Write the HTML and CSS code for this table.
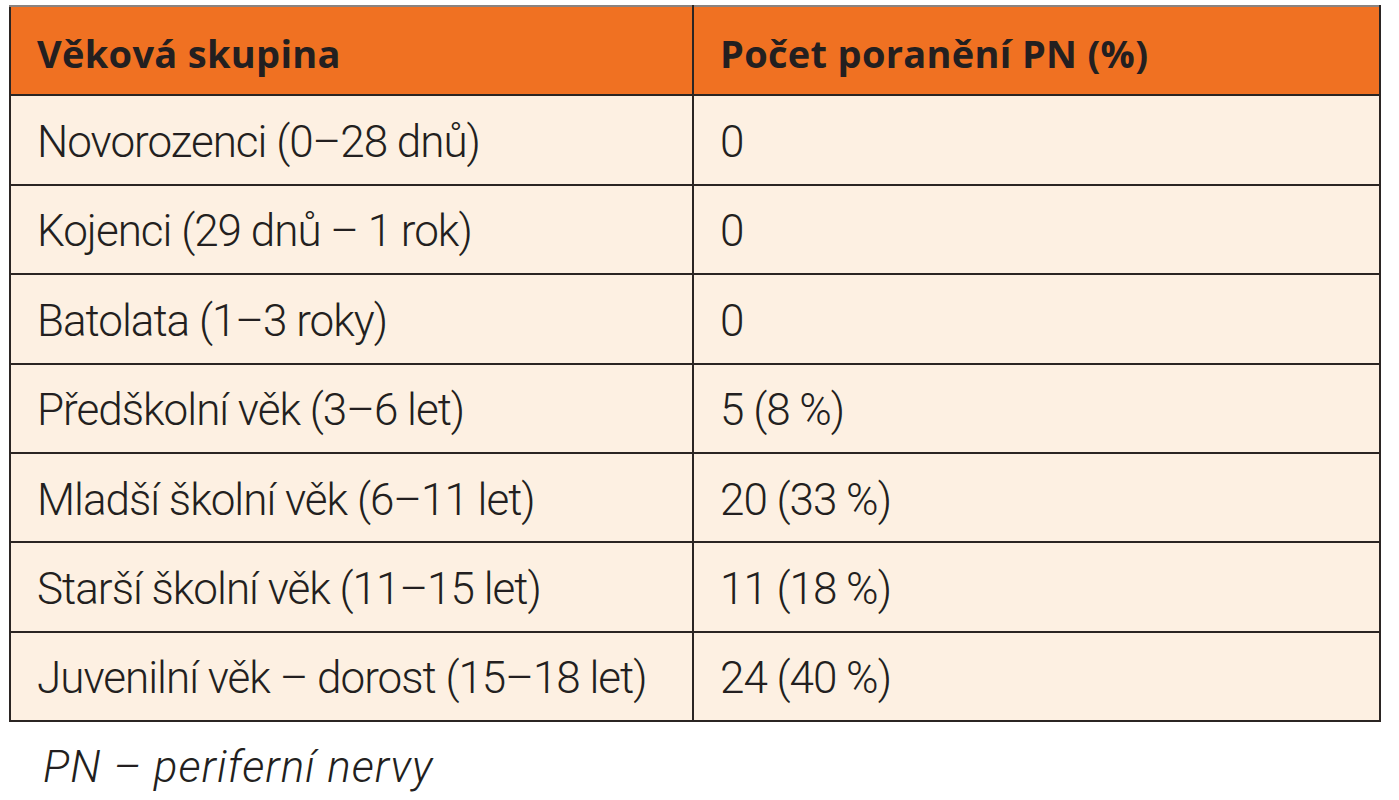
FILE: index.html
```html
<!DOCTYPE html>
<html lang="cs">
<head>
<meta charset="utf-8">
<link rel="stylesheet" href="styles.css">
</head>
<body>
<div class="wrap">
<table class="age-table">
<thead>
<tr><th class="c1">Věková skupina</th><th class="c2">Počet poranění PN (%)</th></tr>
</thead>
<tbody>
<tr><td>Novorozenci (0–28 dnů)</td><td>0</td></tr>
<tr><td>Kojenci (29 dnů – 1 rok)</td><td>0</td></tr>
<tr><td>Batolata (1–3 roky)</td><td>0</td></tr>
<tr><td>Předškolní věk (3–6 let)</td><td>5 (8 %)</td></tr>
<tr><td>Mladší školní věk (6–11 let)</td><td>20 (33 %)</td></tr>
<tr><td>Starší školní věk (11–15 let)</td><td>11 (18 %)</td></tr>
<tr><td>Juvenilní věk – dorost (15–18 let)</td><td>24 (40 %)</td></tr>
</tbody>
</table>
<p class="note">PN – periferní nervy</p>
</div>
</body>
</html>
```
FILE: styles.css
```css
html, body {
  margin: 0;
  padding: 0;
  background: #ffffff;
}
.wrap {
  padding: 5px 0 0 9px;
}
.age-table {
  border-collapse: collapse;
  width: 1372px;
  table-layout: fixed;
  font-family: Roboto, "Liberation Sans", sans-serif;
  color: #231f20;
}
.age-table th, .age-table td {
  border: 2px solid #2b2523;
  height: 83.4px;
  padding: 4px 0 0 26px;
  text-align: left;
  vertical-align: middle;
}
.age-table th {
  background: #f07122;
  font-family: "Open Sans", Roboto, sans-serif;
  font-weight: 700;
  font-size: 38px;
  letter-spacing: 0.3px;
  border-top-color: #8a8380;
}
.age-table th.c1 { width: 655px; }
.age-table td {
  background: #fdf0e2;
  font-weight: 300;
  font-size: 44px;
  letter-spacing: -1px;
}
.note {
  margin: 19px 0 0 34px;
  font-family: Roboto, "Liberation Sans", sans-serif;
  font-style: italic;
  font-weight: 300;
  font-size: 44px;
  letter-spacing: 1px;
  color: #231f20;
}
```
